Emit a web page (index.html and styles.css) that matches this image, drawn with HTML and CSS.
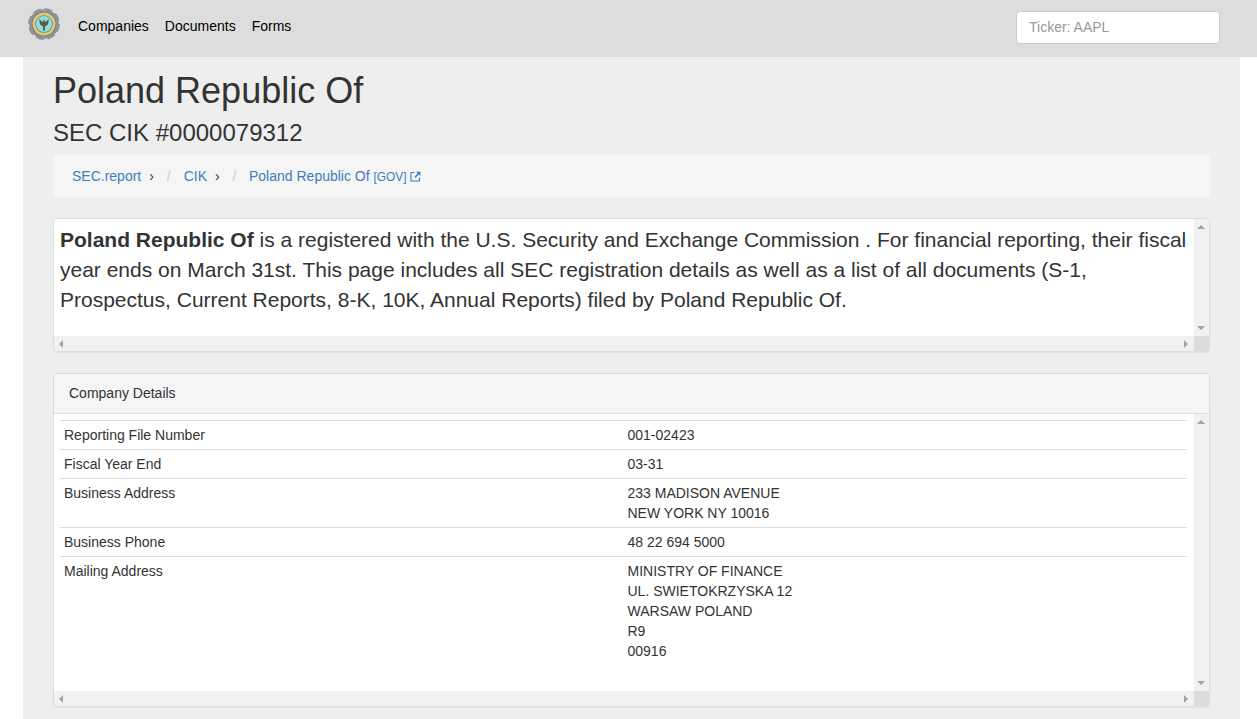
FILE: index.html
```html
<!DOCTYPE html>
<html>
<head>
	<meta charset="utf-8">
	<title>Poland Republic Of</title>
	<link rel="stylesheet" href="styles.css">
</head>
<body>
	<nav class="navbar">
		<a class="brand" href="#">
			<svg width="34" height="34" viewBox="0 0 34 34">
				<circle cx="17" cy="17" r="14.800" fill="#8f9297"/>
				<circle cx="17" cy="17" r="15.200" fill="none" stroke="#8f9297" stroke-width="1.600" stroke-dasharray="8 3.940"/>
				<circle cx="17" cy="17" r="12.300" fill="#6f7478"/>
				<circle cx="17" cy="17" r="11.500" fill="#d8c97c"/>
				<circle cx="17" cy="17" r="8.800" fill="#7d8474"/>
				<circle cx="17" cy="17" r="8" fill="#8fdde2"/>
				<!-- eagle -->
				<path d="M17 12.500l-1.500 2.500-3.500-3 1 5.500 3 2v4h2v-4l3-2 1-5.500-3.500 3z" fill="#5a5f4a"/>
			</svg>
		</a>
		<ul class="nav-links">
			<li><a href="#">Companies</a></li>
			<li><a href="#">Documents</a></li>
			<li><a href="#">Forms</a></li>
		</ul>
		<input class="ticker" type="text" placeholder="Ticker: AAPL">
	</nav>

	<div class="container">
		<h1>Poland Republic Of</h1>
		<h3>SEC CIK #0000079312</h3>

		<ol class="breadcrumb">
			<li><a href="#">SEC.report</a> <span class="arrow">›</span></li>
			<li><a href="#">CIK</a> <span class="arrow">›</span></li>
			<li><a href="#">Poland Republic Of <small>[GOV]</small>
					<svg class="ext" width="11" height="11" viewBox="0 0 11 11">
						<path d="M4.500 1.500h-3.500v8.500h8.500v-3.500" fill="none" stroke="currentColor" stroke-width="1.100"/>
						<path d="M6 .7h4.300v4.300l-1.500-1.500-3.300 3.300-1.100-1.100 3.300-3.300z" fill="currentColor"/>
					</svg>
				</a></li>
		</ol>

		<div class="panel">
			<div class="scrollbox intro">
				<div class="scroll-content">
					<p><b>Poland Republic Of</b> is a registered with the U.S. Security and Exchange Commission . For financial reporting, their fiscal year ends on March 31st. This page includes all SEC registration details as well as a list of all documents (S-1, Prospectus, Current Reports, 8-K, 10K, Annual Reports) filed by Poland Republic Of.</p>
				</div>
				<div class="vbar"><i class="up"></i><i class="down"></i></div>
				<div class="hbar"><i class="left"></i><i class="right"></i></div>
				<div class="corner"></div>
			</div>
		</div>

		<div class="panel">
			<div class="panel-heading">Company Details</div>
			<div class="scrollbox details">
				<div class="scroll-content">
					<table>
						<tr><td>Reporting File Number</td><td>001-02423</td></tr>
						<tr><td>Fiscal Year End</td><td>03-31</td></tr>
						<tr><td>Business Address</td><td>233 MADISON AVENUE<br>NEW YORK NY 10016</td></tr>
						<tr><td>Business Phone</td><td>48 22 694 5000</td></tr>
						<tr><td>Mailing Address</td><td>MINISTRY OF FINANCE<br>UL. SWIETOKRZYSKA 12<br>WARSAW POLAND<br>R9<br>00916</td></tr>
					</table>
				</div>
				<div class="vbar"><i class="up"></i><i class="down"></i></div>
				<div class="hbar"><i class="left"></i><i class="right"></i></div>
				<div class="corner"></div>
			</div>
		</div>
	</div>
</body>
</html>
```

FILE: styles.css
```css
html, body {
	height: 719px;
	overflow: hidden;
}
body {
	margin: 0;
	background: #fff;
	color: #333;
	font: 14px/20px "Liberation Sans", Arial, sans-serif;
}
a {
	color: #3f7dbb;
	text-decoration: none;
}

/* top bar */
.navbar {
	display: flex;
	align-items: flex-start;
	height: 57px;
	background: #ddd;
	padding: 0 37px 0 27px;
	box-sizing: border-box;
}
.brand {
	display: block;
	height: 34px;
	margin-top: 7px;
}
.nav-links {
	display: flex;
	gap: 16px;
	list-style: none;
	margin: 16px 0 0 17px;
	padding: 0;
	flex: 1;
}
.nav-links a {
	color: #000;
}
.ticker {
	width: 204px;
	height: 33px;
	margin-top: 11px;
	box-sizing: border-box;
	padding: 5px 12px 7px;
	border: 1px solid #ccc;
	border-radius: 4px;
	background: #fff;
	font: 14px "Liberation Sans", Arial, sans-serif;
}
.ticker::placeholder {
	color: #999;
}

/* page */
.container {
	margin: 0 17px 0 23px;
	padding: 14px 30px 0;
	height: 662px;
	background: #eee;
}
h1 {
	margin: 0 0 9px;
	font-size: 36px;
	font-weight: 500;
	line-height: 40px;
}
h3 {
	margin: 0 0 8px;
	font-size: 24px;
	font-weight: 500;
	line-height: 26px;
}

.breadcrumb {
	display: flex;
	box-sizing: border-box;
	height: 44px;
	list-style: none;
	margin: 0 0 20px;
	padding: 12px 19px;
	background: #f5f5f5;
	border-radius: 4px;
}
.breadcrumb li + li:before {
	content: "/";
	color: #ccc;
	padding: 0 13px;
}
.breadcrumb li:last-child:before {
	padding-right: 12.500px;
}
.breadcrumb small {
	font-size: 11.900px;
}
.ext {
	vertical-align: -1px;
}
.arrow {
	margin-left: 4px;
}

.panel {
	background: #fff;
	border: 1px solid #ddd;
	border-radius: 4px;
	box-shadow: 0 1px 1px rgba(0, 0, 0, .05);
	margin-bottom: 21px;
	overflow: hidden;
}
.panel-heading {
	height: 40px;
	padding: 9px 15px 10px;
	box-sizing: border-box;
	background: #f5f5f5;
	border-bottom: 1px solid #ddd;
}

/* box with both scrollbars showing, nothing to scroll so no thumbs */
.scrollbox {
	display: grid;
	grid-template-columns: minmax(0, 1fr) 15px;
	grid-template-rows: minmax(0, 1fr) 15px;
}
.intro {
	height: 132px;
}
.details {
	height: 292px;
}
.scroll-content {
	overflow: hidden;
}
.intro p {
	margin: 6px 7px 0 6px;
	font-size: 21px;
	line-height: 30px;
}
.details .scroll-content {
	padding: 6px 7px 0 6px;
}

.vbar, .hbar {
	display: flex;
	justify-content: space-between;
	align-items: center;
	box-sizing: border-box;
	background: #f1f1f1;
}
.vbar {
	flex-direction: column;
	padding: 6px 1px 6px 0;
}
.hbar {
	padding: 0 6px 0 5px;
}
.corner {
	background: #dcdcdc;
}
.vbar i, .hbar i {
	width: 0;
	height: 0;
	border-style: solid;
	border-color: transparent;
}
.up {
	border-width: 0 4px 4px;
	border-bottom-color: #a3a3a3 !important;
}
.down {
	border-width: 4px 4px 0;
	border-top-color: #a3a3a3 !important;
}
.left {
	border-width: 4px 4px 4px 0;
	border-right-color: #a3a3a3 !important;
}
.right {
	border-width: 4px 0 4px 4px;
	border-left-color: #a3a3a3 !important;
}

table {
	width: 100%;
	border-collapse: collapse;
	table-layout: fixed;
}
td {
	padding: 4px;
	border-top: 1px solid #ddd;
	vertical-align: top;
}
```
